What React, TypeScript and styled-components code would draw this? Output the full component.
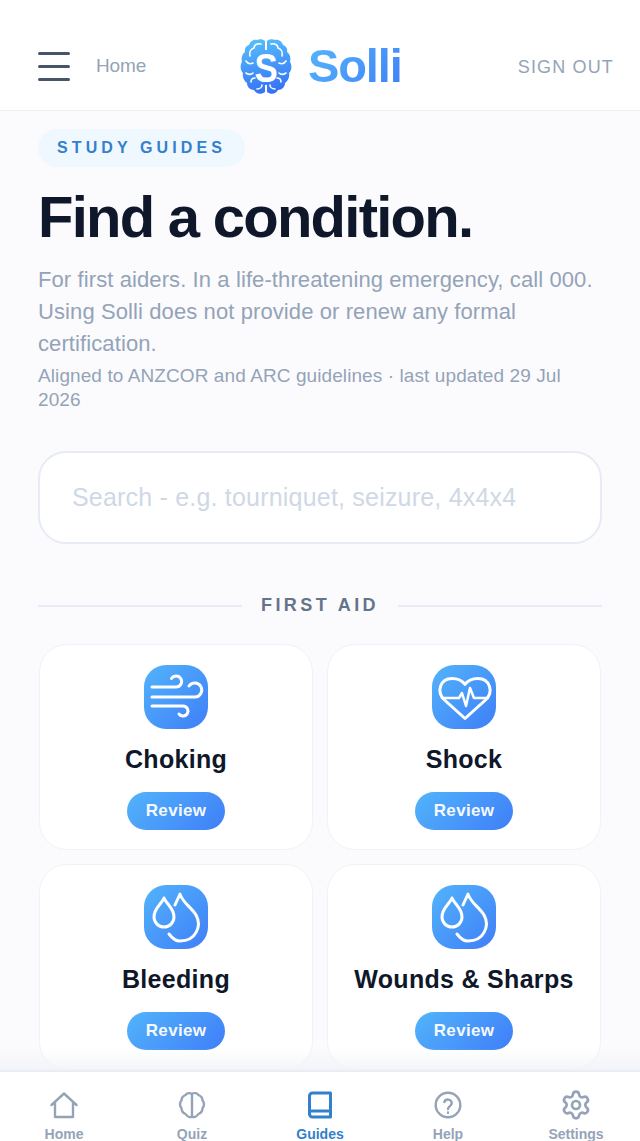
import styled, { createGlobalStyle } from "styled-components";
import { Settings } from "lucide-react";

const GlobalStyle = createGlobalStyle`
  * { box-sizing: border-box; }
  html, body { margin: 0; padding: 0; height: 100%; }
  body {
    background: #fbfbfd;
    font-family: "Liberation Sans", Arial, sans-serif;
    -webkit-font-smoothing: antialiased;
  }
`;

const Screen = styled.div`
  width: 640px;
  height: 1141px;
  display: flex;
  flex-direction: column;
  overflow: hidden;
`;

const Header = styled.header`
  flex: none;
  height: 111px;
  background: #ffffff;
  border-bottom: 1px solid #edf1f7;
  display: flex;
  align-items: center;
  padding: 22px 26px 0 38px;
  position: relative;
`;

const Burger = styled.div`
  width: 32px;
  display: flex;
  flex-direction: column;
  gap: 10px;
  span {
    display: block;
    height: 3px;
    border-radius: 2px;
    background: #475569;
  }
`;

const HomeLink = styled.span`
  margin-left: 26px;
  font-size: 19px;
  letter-spacing: -0.1px;
  color: #94a3b8;
`;

const Brand = styled.div`
  position: absolute;
  left: 240px;
  top: 37px;
  display: flex;
  align-items: center;
  gap: 16px;
`;

const BrandName = styled.span`
  font-size: 47px;
  font-weight: 700;
  line-height: 56px;
  letter-spacing: -1.1px;
  background: linear-gradient(135deg, #56b8fb 0%, #3f7ef8 100%);
  -webkit-background-clip: text;
  background-clip: text;
  color: transparent;
`;

const SignOut = styled.span`
  margin-left: auto;
  margin-top: 3px;
  font-size: 18px;
  letter-spacing: 1.15px;
  color: #94a3b8;
`;

const Main = styled.main`
  flex: 1;
  min-height: 0;
  padding: 18px 38px 0;
  overflow: hidden;
  position: relative;
  &::after {
    content: "";
    position: absolute;
    left: 0;
    right: 0;
    bottom: 0;
    height: 22px;
    background: linear-gradient(to bottom, rgba(246, 247, 250, 0), rgba(240, 242, 247, 0.75));
    pointer-events: none;
  }
`;

const Badge = styled.div`
  display: inline-block;
  height: 38px;
  line-height: 37px;
  padding: 0 19px;
  border-radius: 19px;
  background: #f0f8ff;
  color: #3380cc;
  font-size: 16px;
  font-weight: 700;
  letter-spacing: 4.1px;
`;

const Title = styled.h1`
  margin: 16px 0 0;
  font-size: 58px;
  line-height: 68px;
  font-weight: 700;
  letter-spacing: -1.74px;
  color: #0f172a;
`;

const Lead = styled.p`
  margin: 13px 0 0;
  font-size: 22px;
  line-height: 32px;
  letter-spacing: 0.1px;
  color: #94a3b8;
`;

const Meta = styled.p`
  margin: 4px 0 0;
  font-size: 19px;
  line-height: 24px;
  letter-spacing: 0.09px;
  color: #94a3b8;
`;

const Search = styled.div`
  margin-top: 39px;
  height: 93px;
  background: #ffffff;
  border: 2px solid #e6ebf5;
  border-radius: 28px;
  padding: 0 32px;
  display: flex;
  align-items: center;
  font-size: 25px;
  letter-spacing: 0.2px;
  color: #cfd8e6;
`;

const Divider = styled.div`
  margin-top: 51px;
  display: flex;
  align-items: center;
  gap: 19px;
  color: #64748b;
  font-size: 18px;
  font-weight: 700;
  letter-spacing: 3.4px;
  &::before,
  &::after {
    content: "";
    flex: 1;
    height: 2px;
    background: #e6ebf5;
  }
`;

const Grid = styled.div`
  margin-top: 28px;
  display: grid;
  grid-template-columns: 274px 274px;
  gap: 14px;
  padding: 0 1px;
`;

const Card = styled.div`
  height: 206px;
  background: #ffffff;
  border: 1px solid #eff2f8;
  border-radius: 28px;
  display: flex;
  flex-direction: column;
  align-items: center;
  padding-top: 20px;
`;

const IconTile = styled.div`
  width: 64px;
  height: 64px;
  border-radius: 22px;
  background: linear-gradient(135deg, #52b4fb 0%, #3f7ef8 100%);
  display: flex;
  align-items: center;
  justify-content: center;
`;

const CardTitle = styled.div`
  margin-top: 15px;
  font-size: 25px;
  line-height: 30px;
  font-weight: 700;
  letter-spacing: 0.3px;
  color: #0f172a;
`;

const ReviewButton = styled.div`
  margin-top: 18px;
  width: 98px;
  height: 38px;
  border-radius: 19px;
  background: linear-gradient(135deg, #52b4fb 0%, #3f7ef8 100%);
  color: #f4f9ff;
  font-size: 17px;
  font-weight: 700;
  letter-spacing: 0.3px;
  line-height: 37px;
  text-align: center;
`;

const Nav = styled.nav`
  flex: none;
  height: 71px;
  background: #ffffff;
  border-top: 2px solid #e9edf6;
  display: grid;
  grid-template-columns: repeat(5, 128px);
`;

const NavItem = styled.div<{ $active?: boolean }>`
  display: flex;
  flex-direction: column;
  align-items: center;
  padding-top: 19px;
  color: ${(p) => (p.$active ? "#3380cc" : "#94a3b8")};
  font-size: 14px;
  font-weight: 700;
  line-height: 16px;
  svg {
    display: block;
    margin-bottom: 7px;
  }
`;

const BrainLogo = () => (
  <svg width="52" height="58" viewBox="0 0 52 58">
    <defs>
      <linearGradient id="brainFill" gradientUnits="userSpaceOnUse" x1="18" y1="2" x2="30" y2="57">
        <stop offset="0" stopColor="#56bdfb" />
        <stop offset="1" stopColor="#3470f6" />
      </linearGradient>
    </defs>
    <path
      d="M25 4C23 2 19 2 17 3C13 2 10 5 9 8C6 9 4 12 5 15C2 17 1 21 2 25C0 28 0 33 3 36C2 40 4 44 7 46C7 50 10 53 14 53C16 57 21 58 25 55ZM27 4C29 2 33 2 35 3C39 2 42 5 43 8C46 9 48 12 47 15C50 17 51 21 50 25C52 28 52 33 49 36C50 40 48 44 45 46C45 50 42 53 38 53C36 57 31 58 27 55Z"
      fill="url(#brainFill)"
    />
    <rect x="23" y="13" width="6" height="35" fill="url(#brainFill)" />
    <g fill="none" stroke="#ffffff" strokeWidth="1.6" strokeLinecap="round" strokeLinejoin="round">
      <path d="M21 7C17 6 14 8 14 11C11 12 9 15 10 19" />
      <path d="M6 24C8 27 11 27 13 26" />
      <path d="M6 36C9 38 11 38 13 36" />
      <path d="M11 45C11 42 13 41 15 41" />
      <path d="M17 52C20 52 22 50 22 48" />
      <path d="M31 7C35 6 38 8 38 11C41 12 43 15 42 19" />
      <path d="M46 24C44 27 41 27 39 26" />
      <path d="M46 36C43 38 41 38 39 36" />
      <path d="M41 45C41 42 39 41 37 41" />
      <path d="M35 52C32 52 30 50 30 48" />
    </g>
    <text
      transform="translate(26 44.500) scale(0.85 1)"
      textAnchor="middle"
      fontFamily="Liberation Sans, Arial, sans-serif"
      fontWeight="700"
      fontSize="41"
      fill="#ffffff"
    >
      S
    </text>
  </svg>
);

const TileSvg = styled.svg`
  fill: none;
  stroke: #ffffff;
  stroke-width: 3;
  stroke-linecap: round;
  stroke-linejoin: round;
`;

const WindIcon = () => (
  <TileSvg width="64" height="64" viewBox="0 0 64 64">
    <path d="M8 22H32A5.500 5.500 0 1 0 27.500 13.500" />
    <path d="M8 32H51A7 7 0 1 0 45 21" />
    <path d="M8 41H39A5 5 0 1 1 35 49" />
  </TileSvg>
);

const HeartIcon = () => (
  <TileSvg width="64" height="64" viewBox="0 0 64 64">
    <g transform="translate(1 0)">
      <path d="M32 53.500 11.500 35C3 27 7 13.500 19 13.500C25 13.500 29.500 16 32 19.500C34.500 16 39 13.500 45 13.500C57 13.500 61 27 52.500 35Z" />
      <path d="M9 33H26L29 28L33 41L37 23L41 33H55" strokeWidth="2.500" />
    </g>
  </TileSvg>
);

const DropsIcon = () => (
  <TileSvg width="64" height="64" viewBox="0 0 64 64">
    <path d="M20 13C23 20 30 23 30 32A10 10 0 0 1 10 32C10 23 17 20 20 13Z" />
    <path d="M31 20L36 9C38 17 48 23 52 30C58 41 52 56 36 56C31 56 28 53 25 49" />
  </TileSvg>
);

const NavSvg = styled.svg`
  fill: none;
  stroke: currentColor;
  stroke-width: 2.4;
  stroke-linecap: round;
  stroke-linejoin: round;
`;

const HomeIcon = () => (
  <NavSvg width="28" height="28" viewBox="0 0 28 28">
    <path d="M1.500 14 14 2.500 26.500 14M5 11.500V26H23V11.500" />
  </NavSvg>
);

const QuizIcon = () => (
  <NavSvg width="28" height="28" viewBox="0 0 28 28">
    <path d="M14 3V26M14 3C12 1.500 9 2 7.500 4C5 5 3.500 7 3.500 9.500C1.500 11.500 1.500 15 3.500 17C3.500 20 5 22 7.500 23C9 25.500 12 26.500 14 26M14 3C16 1.500 19 2 20.500 4C23 5 24.500 7 24.500 9.500C26.500 11.500 26.500 15 24.500 17C24.500 20 23 22 20.500 23C19 25.500 16 26.500 14 26" />
  </NavSvg>
);

const BookIcon = () => (
  <NavSvg width="28" height="28" viewBox="0 0 28 28" style={{ strokeWidth: 3 }}>
    <path d="M3.500 21V5A3 3 0 0 1 6.500 2H24.500V26H6.500A3 3 0 0 1 3.500 23V21A2.500 2.500 0 0 1 6 20H24.500" />
  </NavSvg>
);

const HelpIcon = () => (
  <NavSvg width="28" height="28" viewBox="0 0 28 28">
    <circle cx="14" cy="14" r="12.300" />
    <path d="M10.300 11A3.900 3.900 0 0 1 17.800 12C17.800 14.600 14 15.500 14 18M14 21.500V21.700" />
  </NavSvg>
);

const SettingsWrap = styled.span`
  display: block;
  margin-top: -2px;
  svg {
    margin-bottom: 5px;
  }
`;

const cards = [
  { title: "Choking", icon: <WindIcon /> },
  { title: "Shock", icon: <HeartIcon /> },
  { title: "Bleeding", icon: <DropsIcon /> },
  { title: "Wounds & Sharps", icon: <DropsIcon /> },
];

export default function App() {
  return (
    <Screen>
      <GlobalStyle />
      <Header>
        <Burger>
          <span />
          <span />
          <span />
        </Burger>
        <HomeLink>Home</HomeLink>
        <Brand>
          <BrainLogo />
          <BrandName>Solli</BrandName>
        </Brand>
        <SignOut>SIGN OUT</SignOut>
      </Header>
      <Main>
        <Badge>STUDY GUIDES</Badge>
        <Title>Find a condition.</Title>
        <Lead>
          For first aiders. In a life-threatening emergency, call 000. Using Solli does not provide or renew any formal
          certification.
        </Lead>
        <Meta>Aligned to ANZCOR and ARC guidelines · last updated 29 Jul 2026</Meta>
        <Search>Search - e.g. tourniquet, seizure, 4x4x4</Search>
        <Divider>FIRST AID</Divider>
        <Grid>
          {cards.map((card) => (
            <Card key={card.title}>
              <IconTile>{card.icon}</IconTile>
              <CardTitle>{card.title}</CardTitle>
              <ReviewButton>Review</ReviewButton>
            </Card>
          ))}
        </Grid>
      </Main>
      <Nav>
        <NavItem>
          <HomeIcon />
          Home
        </NavItem>
        <NavItem>
          <QuizIcon />
          Quiz
        </NavItem>
        <NavItem $active>
          <BookIcon />
          Guides
        </NavItem>
        <NavItem>
          <HelpIcon />
          Help
        </NavItem>
        <NavItem>
          <SettingsWrap>
            <Settings size={32} strokeWidth={2} />
          </SettingsWrap>
          Settings
        </NavItem>
      </Nav>
    </Screen>
  );
}
